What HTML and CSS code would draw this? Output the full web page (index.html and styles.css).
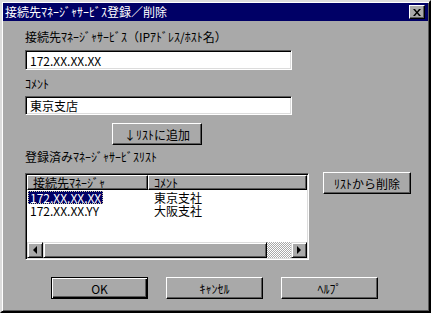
FILE: index.html
```html
<!DOCTYPE html>
<html lang="ja">
<head>
  <meta charset="UTF-8">
  <meta name="viewport" content="width=device-width, initial-scale=1.0">
  <title>接続先ﾏﾈｰｼﾞｬｻｰﾋﾞｽ登録／削除</title>
  <link rel="stylesheet" href="styles.css">
</head>
<body>

  <div class="window">
    <div class="titlebar">
      <span class="title">接続先ﾏﾈｰｼﾞｬｻｰﾋﾞｽ登録／削除</span>
      <button class="close-btn">
        <svg width="8" height="7" viewBox="0 0 8 7">
          <path d="M0 0h2l2 2.5L6 0h2L5 3.5 8 7H6L4 4.5 2 7H0l3-3.5z" fill="#000"/>
        </svg>
      </button>
    </div>

    <div class="content">
      <div class="label">接続先ﾏﾈｰｼﾞｬｻｰﾋﾞｽ（IPｱﾄﾞﾚｽ/ﾎｽﾄ名）</div>
      <input type="text" class="field" value="172.XX.XX.XX">

      <div class="label label-comment">ｺﾒﾝﾄ</div>
      <input type="text" class="field field-comment" value="東京支店">

      <div class="add-row">
        <button class="btn btn-add">↓ﾘｽﾄに追加</button>
      </div>

      <div class="label label-list">登録済みﾏﾈｰｼﾞｬｻｰﾋﾞｽﾘｽﾄ</div>

      <div class="list-row">
        <div class="listview">
          <div class="lv-header">
            <div class="lv-head col-host">接続先ﾏﾈｰｼﾞｬ</div>
            <div class="lv-head col-comment">ｺﾒﾝﾄ</div>
          </div>
          <div class="lv-body">
            <div class="lv-row">
              <div class="col-host"><span class="selected">172.XX.XX.XX</span></div>
              <div class="col-comment">東京支社</div>
            </div>
            <div class="lv-row">
              <div class="col-host"><span>172.XX.XX.YY</span></div>
              <div class="col-comment">大阪支社</div>
            </div>
          </div>
          <div class="hscroll">
            <div class="sb-btn"><span class="arrow arrow-left"></span></div>
            <div class="sb-thumb"></div>
            <div class="sb-track"></div>
            <div class="sb-btn"><span class="arrow arrow-right"></span></div>
          </div>
        </div>
        <button class="btn btn-remove">ﾘｽﾄから削除</button>
      </div>

      <div class="footer">
        <button class="btn btn-footer btn-default">OK</button>
        <button class="btn btn-footer">ｷｬﾝｾﾙ</button>
        <button class="btn btn-footer">ﾍﾙﾌﾟ</button>
      </div>
    </div>
  </div>

</body>
</html>
```

FILE: styles.css
```css
body {
  margin: 0;
  font-family: "Noto Sans CJK JP", sans-serif;
  font-size: 12px;
  background: #a9a9a9;
}
.window {
  box-sizing: border-box;
  width: 431px;
  height: 313px;
  padding: 1px;
  background: #a9a9a9;
  border: 2px solid;
  border-color: #dcdcdc #000 #000 #dcdcdc;
  box-shadow: inset 1px 1px #fff, inset -1px -1px #5a5a5a;
}
.titlebar {
  height: 18px;
  background: #000066;
  color: #fff;
  display: flex;
  align-items: center;
  justify-content: space-between;
  padding: 0 3px 0 2px;
}
.title {
  line-height: 18px;
}
.close-btn {
  box-sizing: border-box;
  width: 16px;
  height: 14px;
  padding: 0;
  display: flex;
  align-items: center;
  justify-content: center;
  background: #a9a9a9;
  border: 1px solid;
  border-color: #fff #000 #000 #fff;
  box-shadow: inset -1px -1px #5a5a5a;
}
.content {
  padding: 9px 0 0 22px;
}
.label {
  line-height: 14px;
  color: #000;
}
.field {
  display: block;
  box-sizing: border-box;
  width: 267px;
  height: 20px;
  margin-top: 6px;
  padding: 0 4px;
  font-family: inherit;
  font-size: 12px;
  color: #000;
  background: #fff;
  border: 1px solid;
  border-color: #5a5a5a #fff #fff #5a5a5a;
  box-shadow: inset 1px 1px #000, inset -1px -1px #dcdcdc;
  outline: none;
}
.label-comment {
  margin-top: 7px;
}
.field-comment {
  height: 19px;
  margin-top: 5px;
}
.btn {
  box-sizing: border-box;
  padding: 0;
  font-family: inherit;
  font-size: 12px;
  color: #000;
  background: #a9a9a9;
  border: 1px solid;
  border-color: #fff #000 #000 #fff;
  box-shadow: inset -1px -1px #5a5a5a;
  height: 22px;
}
.add-row {
  margin-top: 8px;
  padding-left: 87px;
}
.btn-add {
  width: 90px;
}
.label-list {
  margin-top: 5px;
}
.list-row {
  display: flex;
  align-items: flex-start;
  gap: 14px;
  margin-top: 8px;
}
.listview {
  box-sizing: border-box;
  width: 284px;
  height: 87px;
  margin-top: 1px;
  background: #fff;
  border: 1px solid;
  border-color: #5a5a5a #fff #fff #5a5a5a;
  box-shadow: inset 1px 1px #000, inset -1px -1px #dcdcdc;
  padding: 1px;
  display: flex;
  flex-direction: column;
}
.lv-header {
  display: flex;
  height: 15px;
  background: #a9a9a9;
}
.lv-head {
  box-sizing: border-box;
  height: 15px;
  line-height: 13px;
  padding-left: 5px;
  overflow: hidden;
  border: 1px solid;
  border-color: #fff #000 #000 #fff;
  box-shadow: inset -1px -1px #5a5a5a;
}
.lv-header .col-host {
  width: 121px;
}
.lv-header .col-comment {
  flex: 1;
}
.lv-body {
  flex: 1;
  padding-top: 1px;
}
.lv-row {
  display: flex;
  line-height: 13px;
  height: 13px;
}
.lv-row .col-host {
  width: 121px;
  padding-left: 1px;
  box-sizing: border-box;
}
.lv-row .col-comment {
  padding-left: 6px;
}
.lv-row span {
  display: inline-block;
  padding: 0 2px;
}
.selected {
  background: #000066;
  color: #fff;
  outline: 1px dotted #c8c8a0;
  outline-offset: -1px;
}
.hscroll {
  display: flex;
  height: 16px;
}
.sb-btn,
.sb-thumb {
  box-sizing: border-box;
  height: 16px;
  background: #a9a9a9;
  border: 1px solid;
  border-color: #dcdcdc #000 #000 #dcdcdc;
  box-shadow: inset 1px 1px #fff, inset -1px -1px #5a5a5a;
}
.sb-btn {
  width: 16px;
  display: flex;
  align-items: center;
  justify-content: center;
}
.sb-thumb {
  width: 224px;
}
.sb-track {
  flex: 1;
  background: repeating-conic-gradient(#fff 0 25%, #a9a9a9 0 50%) 0 0 / 2px 2px;
}
.arrow {
  width: 0;
  height: 0;
  border-top: 4px solid transparent;
  border-bottom: 4px solid transparent;
}
.arrow-left {
  border-right: 4px solid #000;
}
.arrow-right {
  border-left: 4px solid #000;
}
.btn-remove {
  width: 88px;
}
.footer {
  display: flex;
  gap: 18px;
  margin-top: 17px;
  padding-left: 26px;
}
.btn-footer {
  width: 97px;
}
.btn-default {
  border-color: #000;
  box-shadow: inset 1px 1px #fff, inset -1px -1px #000, inset -2px -2px #5a5a5a;
}
```
